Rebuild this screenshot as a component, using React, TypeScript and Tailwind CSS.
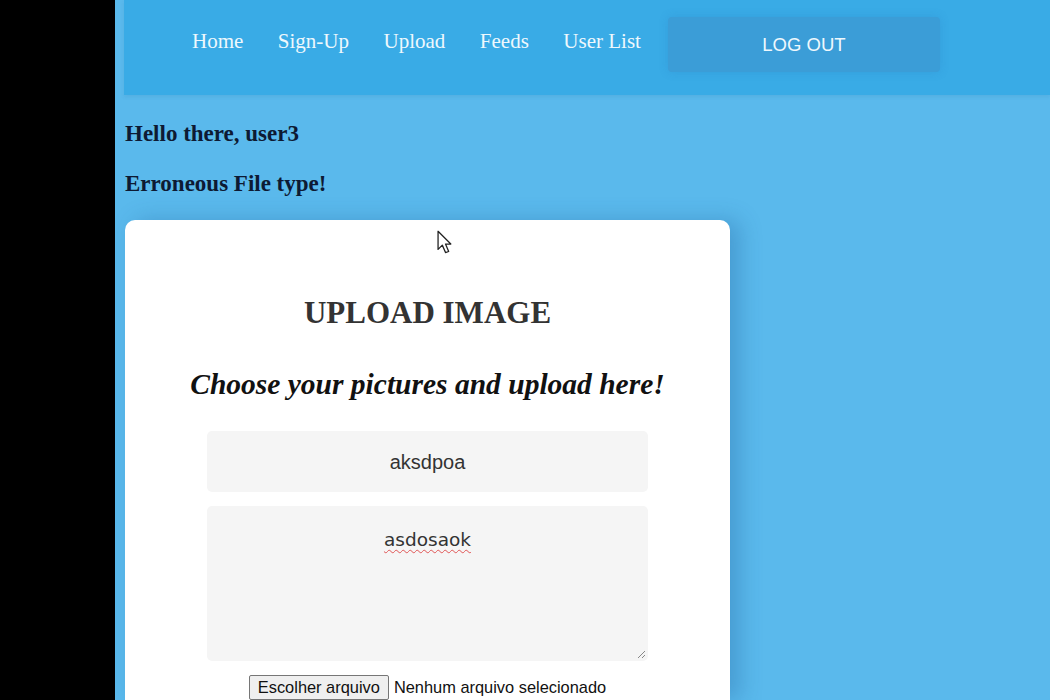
const NAV = ["Home", "Sign-Up", "Upload", "Feeds", "User List"];

function Cursor() {
  return (
    <svg
      className="absolute left-[312px] top-[10px]"
      width="17"
      height="26"
      viewBox="0 0 16 24"
    >
      <path
        d="M1 1 L1 18 L5 14 L8 21 L11 20 L8 13 L13 13 Z"
        fill="#fff"
        stroke="#222"
        strokeWidth="1.2"
        strokeLinejoin="round"
      />
    </svg>
  );
}

export default function App() {
  return (
    <div className="flex h-[700px] w-[1050px] overflow-hidden bg-black">
      <div className="w-[115px] shrink-0 bg-black" />
      <div className="flex flex-1 flex-col bg-[#5ab9ec]">
        <header className="ml-[9px] flex h-[96px] items-center bg-[#39abe6] pl-[68px] shadow-[0_2px_4px_rgba(0,60,120,0.08)]">
          <nav className="flex items-center gap-[34.5px] pb-[12px] font-['Liberation_Serif',serif] text-[21px] text-[#eef8fd]">
            {NAV.map((n) => (
              <a key={n} href="#">
                {n}
              </a>
            ))}
          </nav>
          <button className="mb-[14px] ml-[27px] mt-[8px] h-[55px] w-[272px] rounded-[4px] bg-[#3b9dd7] font-['Liberation_Sans',sans-serif] text-[18.5px] text-[#eef8fd] shadow-[0_0_8px_rgba(40,120,190,0.25)]">
            LOG OUT
          </button>
        </header>

        <div className="pl-[10px] font-['Liberation_Serif',serif] text-[23px] font-bold text-[#0d1a33]">
          <h3 className="mt-[26px] leading-[26px]">Hello there, user3</h3>
          <h3 className="mt-[24px] leading-[26px]">Erroneous File type!</h3>
        </div>

        <div className="relative ml-[10px] mt-[23px] flex w-[605px] flex-1 flex-col items-center rounded-t-[10px] bg-white shadow-[10px_0_22px_rgba(20,80,140,0.28)]">
          <Cursor />
          <h2 className="mt-[77px] font-['Liberation_Serif',serif] text-[31px] font-bold leading-[32px] text-[#333]">
            UPLOAD IMAGE
          </h2>
          <h3 className="mt-[39px] font-['Liberation_Serif',serif] text-[29.5px] font-bold italic leading-[32px] text-[#111]">
            Choose your pictures and upload here!
          </h3>
          <div className="mt-[31px] flex h-[61px] w-[441px] items-center justify-center rounded-[5px] bg-[#f5f5f5] font-['Liberation_Sans',sans-serif] text-[20px] text-[#333]">
            aksdpoa
          </div>
          <div className="relative mt-[14px] flex h-[155px] w-[441px] justify-center rounded-[5px] bg-[#f5f5f5] pt-[20px] font-['DejaVu_Sans',sans-serif] text-[18.5px] text-[#333]">
            <span className="underline decoration-[#e05555] decoration-wavy decoration-1 underline-offset-[3px]">
              asdosaok
            </span>
            <svg
              className="absolute bottom-[2px] right-[2px]"
              width="10"
              height="10"
              viewBox="0 0 10 10"
            >
              <path d="M9 2 L2 9 M9 6 L6 9" stroke="#888" strokeWidth="1" />
            </svg>
          </div>
          <div className="mt-[14px] flex items-center font-['Liberation_Sans',sans-serif] text-[16.4px] text-[#111]">
            <span className="flex h-[25px] items-center rounded-[2px] border border-[#767676] bg-[#efefef] px-[8px]">
              Escolher arquivo
            </span>
            <span className="ml-[5px]">Nenhum arquivo selecionado</span>
          </div>
        </div>
      </div>
    </div>
  );
}
